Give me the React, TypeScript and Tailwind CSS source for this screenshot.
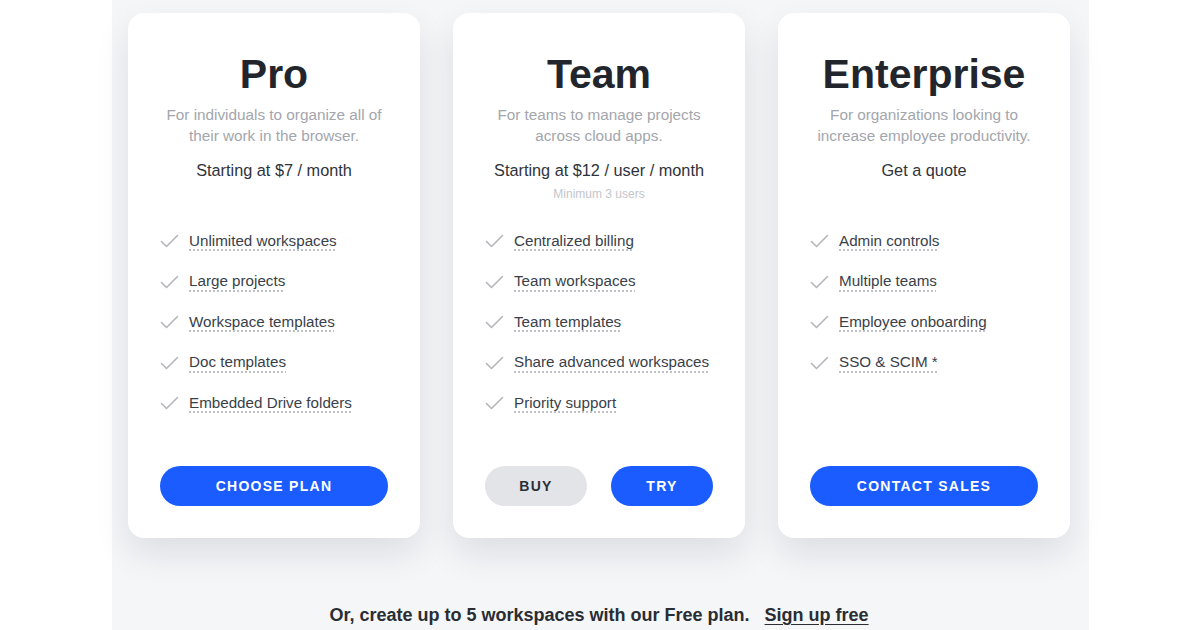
import { ReactNode } from 'react';

interface Plan {
  name: string;
  desc: string[];
  price: string;
  note?: string;
  features: string[];
  actions: ReactNode;
}

function Check() {
  return (
    <svg width="19" height="14" viewBox="0 0 19 14" fill="none" className="shrink-0">
      <path d="M1.5 7.5l5 5L17.5 1.5" stroke="#b4b6ba" strokeWidth="1.6" strokeLinecap="round" strokeLinejoin="round" />
    </svg>
  );
}

const btn = 'h-10 rounded-full text-[14px] font-bold tracking-[0.09em] uppercase';

const plans: Plan[] = [
  {
    name: 'Pro',
    desc: ['For individuals to organize all of', 'their work in the browser.'],
    price: 'Starting at $7 / month',
    features: ['Unlimited workspaces', 'Large projects', 'Workspace templates', 'Doc templates', 'Embedded Drive folders'],
    actions: <button className={`${btn} w-full bg-[#1a5cff] text-white`}>Choose plan</button>,
  },
  {
    name: 'Team',
    desc: ['For teams to manage projects', 'across cloud apps.'],
    price: 'Starting at $12 / user / month',
    note: 'Minimum 3 users',
    features: ['Centralized billing', 'Team workspaces', 'Team templates', 'Share advanced workspaces', 'Priority support'],
    actions: (
      <div className="flex gap-6">
        <button className={`${btn} w-[102px] bg-[#e3e4e8] text-[#2b2f36]`}>Buy</button>
        <button className={`${btn} w-[102px] bg-[#1a5cff] text-white`}>Try</button>
      </div>
    ),
  },
  {
    name: 'Enterprise',
    desc: ['For organizations looking to', 'increase employee productivity.'],
    price: 'Get a quote',
    features: ['Admin controls', 'Multiple teams', 'Employee onboarding', 'SSO & SCIM *'],
    actions: <button className={`${btn} w-full bg-[#1a5cff] text-white`}>Contact sales</button>,
  },
];

export default function App() {
  return (
    <div className="w-[1200px] h-[630px] overflow-hidden bg-white flex justify-center" style={{ fontFamily: '"Liberation Sans", Arial, sans-serif' }}>
      <div className="w-[977px] h-full bg-[#f5f6f8] flex flex-col items-center pt-[13px] pr-[2px]">
        <div className="flex gap-[33px]">
          {plans.map((p) => (
            <div key={p.name} className="w-[292px] h-[525px] bg-white rounded-2xl shadow-[0_16px_34px_rgba(20,24,40,0.1)] px-8 pt-[36px] pb-8 flex flex-col">
              <h2 className="text-center text-[41px] leading-[50px] font-bold text-[#22262c]">{p.name}</h2>
              <p className="mt-[5px] text-center text-[15.3px] leading-[21px] text-[#a3a6ad]">
                {p.desc[0]}
                <br />
                {p.desc[1]}
              </p>
              <div className="h-[75px] pt-3 text-center">
                <p className="text-[16.3px] leading-[24px] text-[#2f333a]">{p.price}</p>
                {p.note && <p className="mt-[3px] text-[12px] leading-[18px] text-[#c3c6cc]">{p.note}</p>}
              </div>
              <ul className="flex flex-col">
                {p.features.map((f) => (
                  <li key={f} className="h-[40.5px] flex items-center gap-[10px]">
                    <Check />
                    <span className="text-[15.2px] text-[#3a3f4a] underline decoration-dotted decoration-[#a9adb4] underline-offset-[4px]">{f}</span>
                  </li>
                ))}
              </ul>
              <div className="mt-auto">{p.actions}</div>
            </div>
          ))}
        </div>
        <p className="mt-[64px] text-[18px] font-bold text-[#2a2d33]">
          Or, create up to 5 workspaces with our Free plan.
          <a className="ml-[15px] underline underline-offset-[3px]">Sign up free</a>
        </p>
      </div>
    </div>
  );
}
